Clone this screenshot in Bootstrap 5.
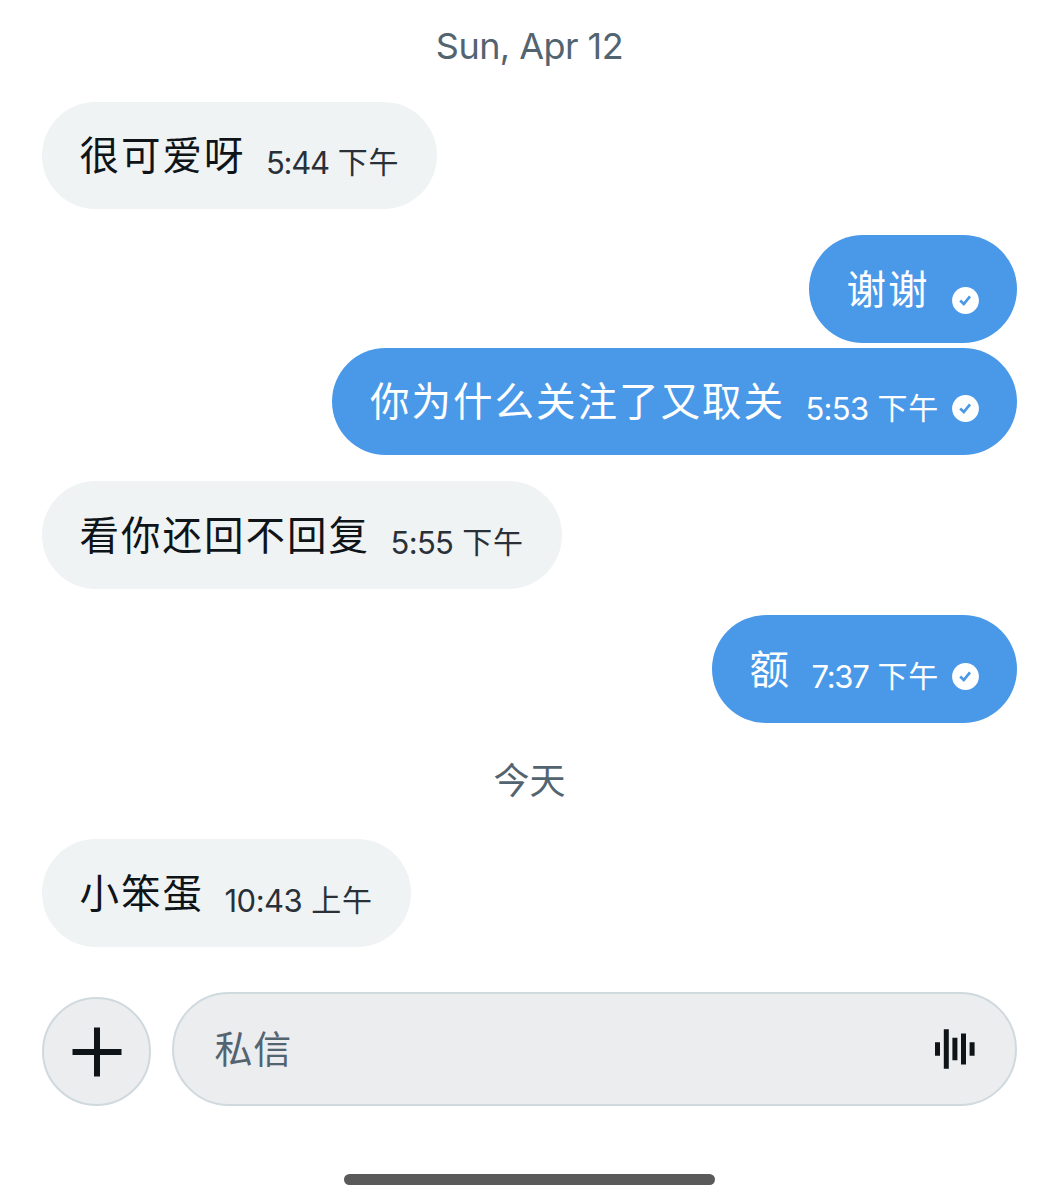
<!DOCTYPE html>
<html lang="zh-CN">
<head>
<meta charset="utf-8">
<meta name="viewport" content="width=device-width, initial-scale=1">
<title>私信</title>
<link href="https://cdn.jsdelivr.net/npm/bootstrap@5.3.0/dist/css/bootstrap.min.css" rel="stylesheet">
<style>
body { font-family: Inter, "Noto Sans CJK SC", sans-serif; background: #fff; color: #0f1419; }
.screen { width: 1059px; height: 1200px; padding: 0 42px; overflow: hidden; }
.day { color: #536471; font-size: 36px; line-height: 44px; }
.day-first { padding: 24px 0 33.5px; letter-spacing: -.55px; }
.day-today { padding: 36px 0 36.5px; }
.bubble { height: 107.5px; border-radius: 54px; padding: 0 38px 0 37.5px; }
.bubble-in { background: #eff3f4; }
.bubble-out { background: #4a99e9; color: #fff; }
.msg { font-size: 39.5px; line-height: 60px; letter-spacing: 2px; margin-right: 20.5px; margin-top: 24.5px; }
.stamp { font-size: 31px; line-height: 40px; margin-top: 41.5px; }
.bubble-in .stamp { color: #2a3038; }
.digits { letter-spacing: -.7px; }
.digits-tight { letter-spacing: -1.3px; }
.digits-wide { letter-spacing: -.5px; }
.ampm { font-size: 30px; letter-spacing: .8px; margin-left: 9px; position: relative; top: -1px; }
.tick { width: 27px; height: 27px; margin: 47.5px 0 0 13px; flex: none; }
.tick-alone { margin: 52px 0 0 2px; }
.gap-group { margin-bottom: 26.2px; }
.gap-near { margin-bottom: 5px; }
.plus { width: 109px; height: 109px; border: 2.5px solid #cfd9de; background: #ecedef; margin-top: 5px; }
.field { height: 114px; border: 2.5px solid #cfd9de; border-radius: 58px; background: #ecedef; padding: 0 40px 0 40.5px; margin-left: 21px; }
.hint { color: #536471; font-size: 38px; letter-spacing: .8px; padding-top: 1px; }
.composer { margin-top: 45.5px; }
.home-bar { width: 371px; height: 11px; border-radius: 6px; background: #5a5a5a; margin-top: 67.5px; }
</style>
</head>
<body>
<svg class="d-none">
  <symbol id="tick" viewBox="0 0 27 27">
    <circle cx="13.5" cy="13.5" r="13.4" fill="#fff"/>
    <path d="M8.2 13.6 11.8 17 18 9.4" fill="none" stroke="#4a99e9" stroke-width="2.7"/>
  </symbol>
</svg>
<main class="screen d-flex flex-column">
  <div class="day day-first text-center">Sun, Apr 12</div>

  <div class="bubble bubble-in d-flex align-self-start gap-group">
    <span class="msg">很可爱呀</span>
    <span class="stamp d-flex"><span class="digits digits-tight">5:44</span><span class="ampm">下午</span></span>
  </div>
  <div class="bubble bubble-out d-flex align-self-end gap-near">
    <span class="msg">谢谢</span>
    <svg class="tick tick-alone"><use href="#tick"/></svg>
  </div>
  <div class="bubble bubble-out d-flex align-self-end gap-group">
    <span class="msg">你为什么关注了又取关</span>
    <span class="stamp d-flex"><span class="digits">5:53</span><span class="ampm">下午</span></span>
    <svg class="tick"><use href="#tick"/></svg>
  </div>
  <div class="bubble bubble-in d-flex align-self-start gap-group">
    <span class="msg">看你还回不回复</span>
    <span class="stamp d-flex"><span class="digits">5:55</span><span class="ampm">下午</span></span>
  </div>
  <div class="bubble bubble-out d-flex align-self-end">
    <span class="msg">额</span>
    <span class="stamp d-flex"><span class="digits digits-tight">7:37</span><span class="ampm">下午</span></span>
    <svg class="tick"><use href="#tick"/></svg>
  </div>

  <div class="day day-today text-center">今天</div>

  <div class="bubble bubble-in d-flex align-self-start">
    <span class="msg">小笨蛋</span>
    <span class="stamp d-flex"><span class="digits digits-wide">10:43</span><span class="ampm">上午</span></span>
  </div>

  <div class="composer d-flex">
    <div class="plus rounded-circle d-flex align-items-center justify-content-center flex-shrink-0">
      <svg width="50" height="50" viewBox="0 0 50 50"><path d="M25 .5v49M.5 25h49" stroke="#0f1419" stroke-width="6"/></svg>
    </div>
    <div class="field d-flex align-items-center justify-content-between flex-grow-1">
      <span class="hint">私信</span>
      <svg width="40" height="40" viewBox="0 0 40 40" fill="#0f1419"><path d="M0 13.2h5v13.6H0zM8.8.3h5v39.4h-5zM17.4 8.8h5v22.4h-5zM26 4.5h5v31h-5zM34.6 13.2h5v13.6h-5z"/></svg>
    </div>
  </div>
  <div class="home-bar align-self-center flex-shrink-0"></div>
</main>
<script src="https://cdn.jsdelivr.net/npm/bootstrap@5.3.0/dist/js/bootstrap.bundle.min.js"></script>
</body>
</html>
